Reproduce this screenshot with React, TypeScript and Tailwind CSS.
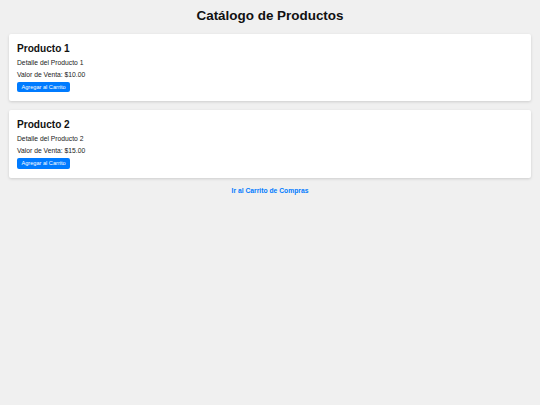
const products = [
  { id: 1, name: 'Producto 1', detail: 'Detalle del Producto 1', price: '$10.00' },
  { id: 2, name: 'Producto 2', detail: 'Detalle del Producto 2', price: '$15.00' },
]

const ProductCard = ({ name, detail, price }: { name: string; detail: string; price: string }) => (
  <div className="bg-white rounded-[2px] shadow-[0_1px_3px_rgba(0,0,0,0.15)] px-2 pt-[8.5px] pb-[9px] flex flex-col items-start">
    <h2 className="text-[10.1px] leading-[11.6px] font-bold text-[#111]">{name}</h2>
    <p className="mt-[5px] text-[6.75px] leading-[7.8px] text-[#222]">{detail}</p>
    <p className="mt-[3.7px] text-[6.75px] leading-[7.8px] text-[#222]">Valor de Venta: {price}</p>
    <button className="mt-[3.5px] h-[10.5px] px-[4.5px] rounded-[2px] bg-[#007bff] text-white text-[5.6px] leading-[10.5px]">
      Agregar al Carrito
    </button>
  </div>
)

export default function App() {
  return (
    <div className="min-h-[405px] bg-[#f0f0f0] px-[9px] pt-[8px] font-['Liberation_Sans',Arial,sans-serif]">
      <h1 className="text-center text-[13.45px] leading-[15.5px] font-bold text-[#111]">Catálogo de Productos</h1>
      <div className="mt-[10.5px] flex flex-col gap-[9px]">
        {products.map((p) => (
          <ProductCard key={p.id} name={p.name} detail={p.detail} price={p.price} />
        ))}
      </div>
      <div className="mt-[9px] text-center text-[6.75px] leading-[7.8px]">
        <a href="#" className="font-bold text-[#007bff]">
          Ir al Carrito de Compras
        </a>
      </div>
    </div>
  )
}
